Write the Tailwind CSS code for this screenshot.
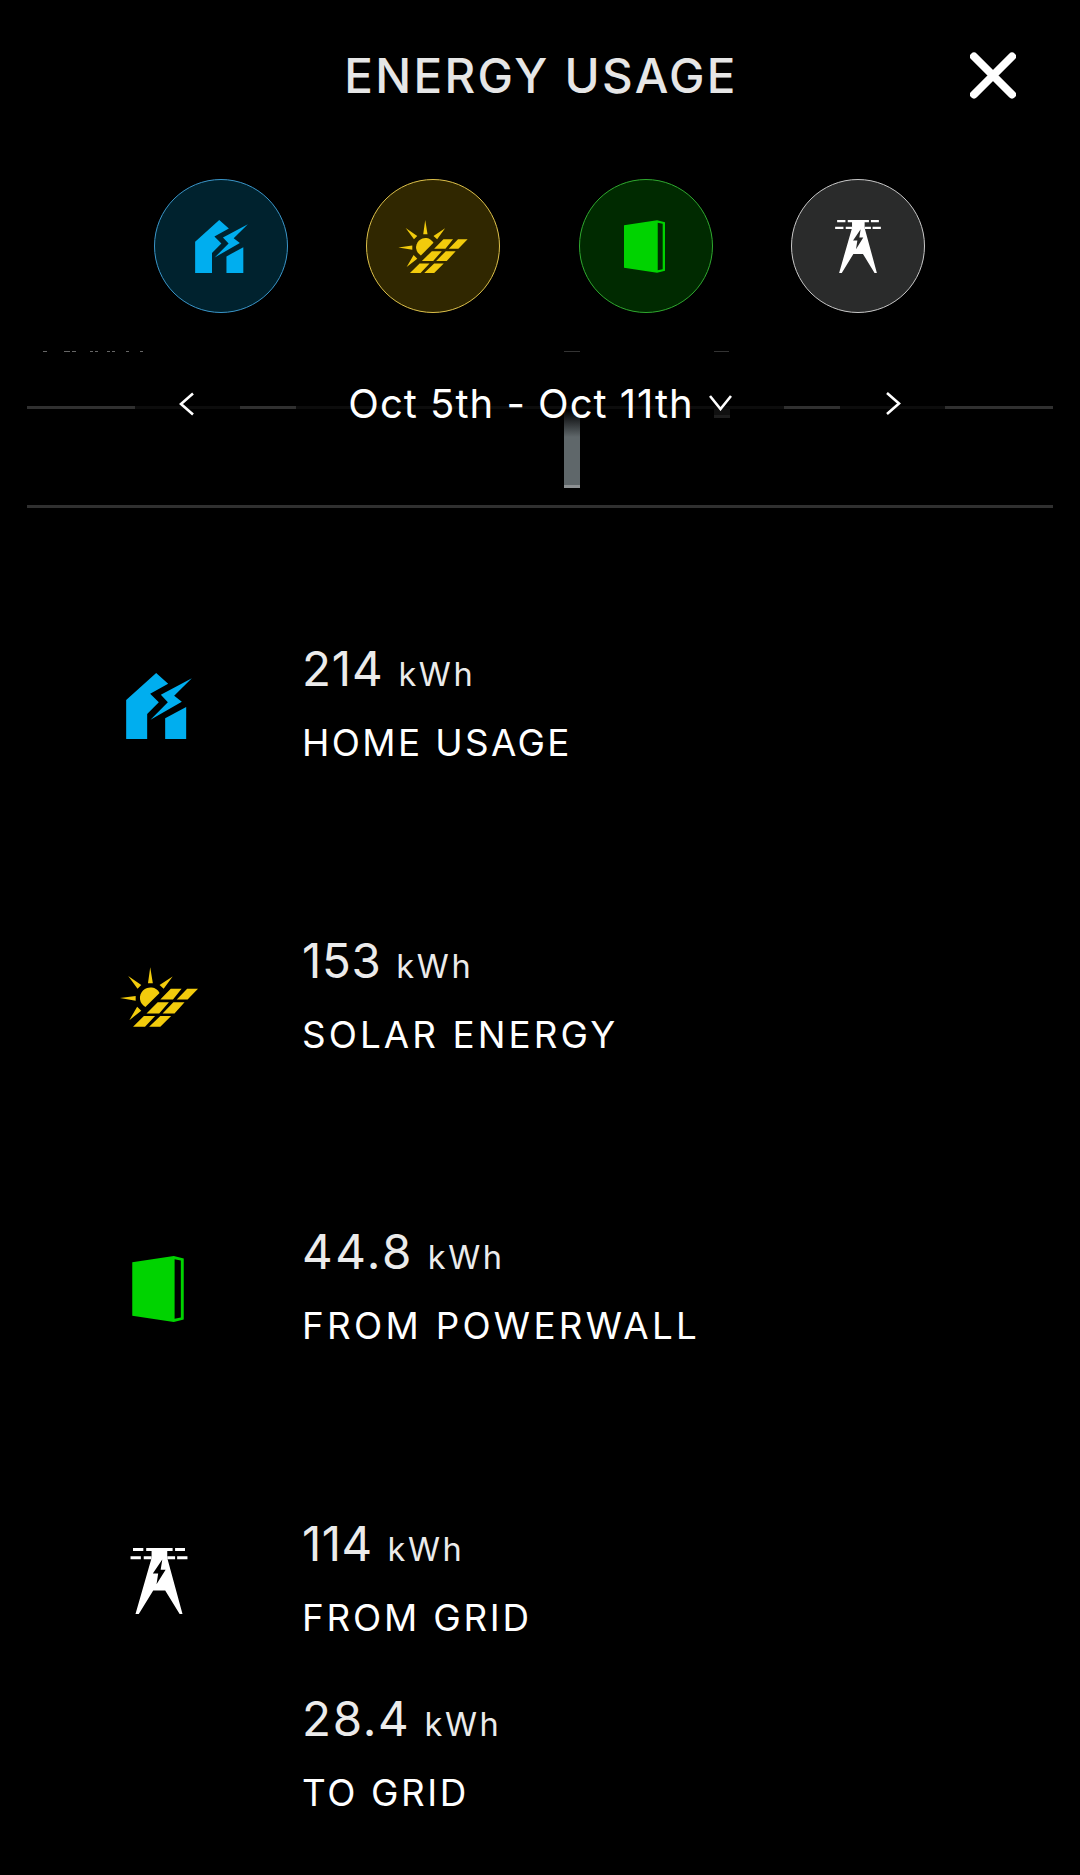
<!DOCTYPE html>
<html lang="en">

<head>
    <meta charset="UTF-8">
    <meta name="viewport" content="width=device-width, initial-scale=1.0">
    <title>Energy Usage</title>
    <script src="https://cdn.jsdelivr.net/npm/@tailwindcss/browser@4"></script>
</head>

<body class="bg-black text-white font-[Inter,sans-serif] w-[1080px] h-[1875px] overflow-hidden">
    <!-- Icon shapes shared by the filter buttons and the list -->
    <svg class="hidden">
        <symbol id="home" viewBox="78 129 197 198">
            <path d="M78 210L168 129L204 161L150 191L176 217L141 252V327H78Z" />
            <path d="M275 145L222 197L245 215L151 269L203 217L182 194Z" />
            <path d="M258 231V327H195V265Z" />
        </symbol>
        <symbol id="solar" viewBox="145 161 209 160">
            <path d="M226 161L233 204H220ZM167 185L202 209L192 219ZM286 186L262 219L251 209ZM145 244L187 238V251ZM170 303L191 267L202 278Z" />
            <path d="M251 230L213 268A28 28 0 1 1 251 230Z" />
            <path d="M281 219H310L287 248H253ZM325 219H354L326 248H297ZM246 255H276L250 285H216ZM288 255H318L291 285H259ZM209 292H239L212 321H180ZM253 292H282L253 321H223Z" />
        </symbol>
        <symbol id="powerwall" viewBox="177 162 124 159">
            <path fill-rule="evenodd" d="M177 177L277 162L301 168V315L277 321L177 306ZM279 170V313L294 310V173Z" />
        </symbol>
        <symbol id="tower" viewBox="168 161 138 160">
            <path d="M174 161H199V168H174ZM206 161H270V168H206ZM276 161H300V168H276ZM168 181H193V188H168ZM200 181H219V188H200ZM257 181H276V188H257ZM281 181H306V188H281Z" />
            <path fill-rule="evenodd" d="M219 161H257V185L294 321H287L252 264H223L188 321H180L219 185ZM245 189L222 223H235L231 249L253 214H241Z" />
        </symbol>
    </svg>

    <header class="relative flex items-center justify-center h-[152px]">
        <h1 class="text-[47.5px] leading-none font-medium tracking-[2.3px] text-[#e6e6e6] pl-[2px]">ENERGY USAGE</h1>
        <button type="button" class="absolute right-[64px] top-[52px]" aria-label="Close">
            <svg class="w-[46px] h-[47px]" viewBox="0 0 46 47" fill="none" stroke="#fff" stroke-width="8" stroke-linecap="round">
                <path d="M4 4.5L42 42.5M42 4.5L4 42.5" />
            </svg>
        </button>
    </header>

    <div class="flex justify-between pl-[154px] pr-[155px] pt-[27px]">
        <button type="button" class="flex items-center justify-center size-[134px] rounded-full border border-[#3a95c8] bg-[#00222e]">
            <svg class="w-[53px] h-[53px] fill-[#00aeef]"><use href="#home" /></svg>
        </button>
        <button type="button" class="flex items-center justify-center size-[134px] rounded-full border border-[#dcc04a] bg-[#302700]">
            <svg class="w-[70px] h-[53px] fill-[#f2cb0c]"><use href="#solar" /></svg>
        </button>
        <button type="button" class="flex items-center justify-center size-[134px] rounded-full border border-[#2fa82f] bg-[#002a00]">
            <svg class="w-[41px] h-[53px] mr-[3px] fill-[#00d300]"><use href="#powerwall" /></svg>
        </button>
        <button type="button" class="flex items-center justify-center size-[134px] rounded-full border border-[#c8c8c8] bg-[#2a2b2b]">
            <svg class="w-[46px] h-[53px] fill-white"><use href="#tower" /></svg>
        </button>
    </div>

    <!-- Bottom of the chart, showing through behind the date picker -->
    <section class="relative mt-[38px] mx-[27px] h-[157px] border-b-[3px] border-[#303030]">
        <svg class="absolute left-0 top-0" width="1026" height="154" viewBox="0 0 1026 154">
            <defs>
                <linearGradient id="fade" x1="0" y1="0" x2="0" y2="1">
                    <stop offset="0" stop-color="#000" />
                    <stop offset="0.4" stop-color="#25282a" />
                    <stop offset="1" stop-color="#5f676a" />
                </linearGradient>
            </defs>
            <path d="M16 0h4v1h-4zM37 0h6v1h-6zM45 0h4v1h-4zM63 0h3v1h-3zM68 0h3v1h-3zM80 0h3v1h-3zM85 0h3v1h-3zM99 0h3v1h-3zM113 0h3v1h-3z" fill="#666" />
            <path d="M537 0h16v1h-16zM687 0h15v1h-15z" fill="#333" />
            <path d="M0 55H1026V58H0Z" fill="#0c0c0c" />
            <path d="M0 55H108V58H0ZM213 55H269V58H213ZM757 55H813V58H757ZM918 55H1026V58H918Z" fill="#303030" />
            <path d="M537 59H553V86H537Z" fill="url(#fade)" />
            <path d="M537 86H553V134H537Z" fill="#5f676a" />
            <path d="M537 134H553V137H537Z" fill="#8d9193" />
            <path d="M687 58H703V64H687Z" fill="#101010" />
            <path d="M687 64H703V67H687Z" fill="#1e1e1e" />
        </svg>
        <div class="relative flex items-center justify-between pl-[152px] pr-[152px] pt-[33px]">
            <svg class="w-[15px] h-[24px]" viewBox="0 0 15 24" fill="none" stroke="#fff" stroke-width="2.6"><path d="M14 1.5L2 12L14 22.5" /></svg>
            <div class="flex items-center">
                <span class="text-[40px] leading-[40px] font-normal tracking-[1px] whitespace-pre">Oct 5th - Oct 11th</span>
                <svg class="w-[23px] h-[16px] ml-[15px] mb-[2px]" viewBox="0 0 23 16" fill="none" stroke="#fff" stroke-width="2.6"><path d="M1 1L11.5 14L22 1" /></svg>
            </div>
            <svg class="w-[15px] h-[24px]" viewBox="0 0 15 24" fill="none" stroke="#fff" stroke-width="2.6"><path d="M1 1L13 11.5L1 22" /></svg>
        </div>
    </section>

    <main class="pt-[137px] pl-[80px]">
        <div class="flex h-[291.67px]">
            <div class="flex justify-center items-center w-[158px] h-[122px]">
                <svg class="w-[66px] h-[66px] fill-[#00aeef]"><use href="#home" /></svg>
            </div>
            <div class="pl-[64px]">
                <p class="flex items-baseline gap-[15px] text-[47.5px] leading-[47px] font-normal text-[#ebebeb]"><span class="tracking-[0.8px]">214</span> <span class="text-[32.5px] tracking-[2.6px]">kWh</span></p>
                <p class="mt-[27px] text-[36.8px] leading-[36px] font-normal tracking-[2.4px]">HOME USAGE</p>
            </div>
        </div>
        <div class="flex h-[291.67px]">
            <div class="flex justify-center items-center w-[158px] h-[121px]">
                <svg class="w-[78px] h-[60px] fill-[#f2cb0c]"><use href="#solar" /></svg>
            </div>
            <div class="pl-[64px]">
                <p class="flex items-baseline gap-[15px] text-[47.5px] leading-[47px] font-normal text-[#ebebeb]"><span class="tracking-[0.6px]">153</span> <span class="text-[32.5px] tracking-[2.6px]">kWh</span></p>
                <p class="mt-[27px] text-[36.8px] leading-[36px] font-normal tracking-[3.1px]">SOLAR ENERGY</p>
            </div>
        </div>
        <div class="flex h-[291.67px]">
            <div class="flex justify-center items-center w-[158px] h-[122px] pr-[3px]">
                <svg class="w-[52px] h-[66px] fill-[#00d300]"><use href="#powerwall" /></svg>
            </div>
            <div class="pl-[64px]">
                <p class="flex items-baseline gap-[14px] text-[47.5px] leading-[47px] font-normal text-[#ebebeb]"><span class="tracking-[2.5px]">44.8</span> <span class="text-[32.5px] tracking-[2.6px]">kWh</span></p>
                <p class="mt-[27px] text-[36.8px] leading-[36px] font-normal tracking-[3.3px]">FROM POWERWALL</p>
            </div>
        </div>
        <div class="flex">
            <div class="flex justify-center items-center w-[158px] h-[122px]">
                <svg class="w-[58px] h-[66px] fill-white"><use href="#tower" /></svg>
            </div>
            <div class="pl-[64px]">
                <p class="flex items-baseline gap-[15px] text-[47.5px] leading-[47px] font-normal text-[#ebebeb]"><span class="tracking-[0.4px]">114</span> <span class="text-[32.5px] tracking-[2.6px]">kWh</span></p>
                <p class="mt-[27px] text-[36.8px] leading-[36px] font-normal tracking-[2.8px]">FROM GRID</p>
                <p class="mt-[59px] flex items-baseline gap-[14px] text-[47.5px] leading-[47px] font-normal text-[#ebebeb]"><span class="tracking-[1.7px]">28.4</span> <span class="text-[32.5px] tracking-[2.6px]">kWh</span></p>
                <p class="mt-[27px] text-[36.8px] leading-[36px] font-normal tracking-[2.6px]">TO GRID</p>
            </div>
        </div>
    </main>
</body>

</html>
